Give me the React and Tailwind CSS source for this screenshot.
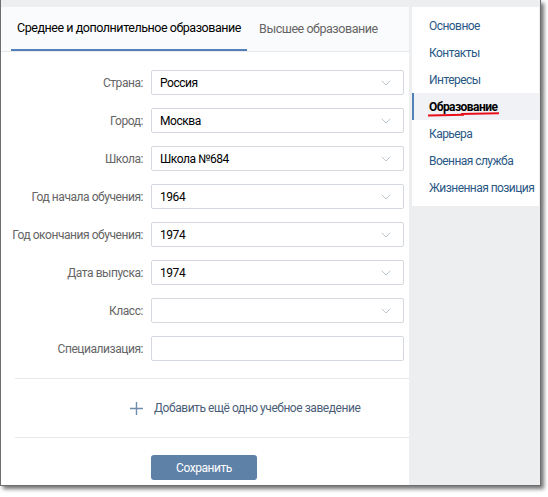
import { ChevronDown } from "lucide-react";

const fields = [
  { label: "Страна:", value: "Россия", select: true },
  { label: "Город:", value: "Москва", select: true },
  { label: "Школа:", value: "Школа №684", select: true },
  { label: "Год начала обучения:", value: "1964", select: true },
  { label: "Год окончания обучения:", value: "1974", select: true },
  { label: "Дата выпуска:", value: "1974", select: true },
  { label: "Класс:", value: "", select: true },
  { label: "Специализация:", value: "", select: false },
];

const menu = [
  "Основное",
  "Контакты",
  "Интересы",
  "Образование",
  "Карьера",
  "Военная служба",
  "Жизненная позиция",
];

function Field({ label, value, select }) {
  return (
    <div className="flex items-center h-[25px]">
      <div className="w-[142px] text-right text-[#656565] whitespace-nowrap">{label}</div>
      <div className="ml-[8px] w-[253px] h-[25px] border border-[#d3d9de] rounded-[2px] flex items-center justify-between pl-[8px] pr-[9px] text-black">
        <span>{value}</span>
        {select && <ChevronDown size={16} strokeWidth={1.1} className="text-[#a5b2c2]" />}
      </div>
    </div>
  );
}

export default function App() {
  return (
    <div className="w-[548px] h-[497px] bg-white overflow-hidden" style={{ fontFamily: "Roboto, 'Liberation Sans', sans-serif" }}>
      <div className="w-[541px] h-[486px] bg-[#edeef0] border-l border-r border-b border-[#6e6e6e] shadow-[3px_3px_4px_rgba(0,0,0,0.55)] pt-[7px] flex gap-[3px] text-[12px] tracking-[-0.45px] overflow-hidden">
        {/* main card */}
        <div className="w-[408px] bg-white flex flex-col">
          <div className="h-[45px] bg-[#fafbfc] border-b border-[#e7e8ec] flex pl-[10px] text-[12.5px] tracking-[-0.45px] whitespace-nowrap">
            <div className="h-full flex items-center px-[6px] border-b-2 border-[#5181b8] text-black mb-[-1px]">
              Среднее и дополнительное образование
            </div>
            <div className="h-full flex items-center px-[12px] text-[#656565]">
              Высшее образование
            </div>
          </div>

          <div className="flex flex-col gap-[13px] pt-[18px] pb-[17px]">
            {fields.map((f) => (
              <Field key={f.label} {...f} />
            ))}
          </div>

          <div className="ml-[14px] border-t border-[#e7e8ec] h-[59px] flex items-center pl-[115px]">
            <div className="flex items-center gap-[11px] text-[#4a5e78]">
              <svg width="13" height="13" viewBox="0 0 13 13">
                <path d="M6.5 0v13M0 6.5h13" stroke="#6f8bad" strokeWidth="1.4" />
              </svg>
              <span>Добавить ещё одно учебное заведение</span>
            </div>
          </div>

          <div className="ml-[14px] border-t border-[#e7e8ec] pt-[17px]">
            <button className="ml-[136px] w-[106px] h-[25px] bg-[#5e81a8] rounded-[3px] text-white text-[12px] flex items-center justify-center">
              Сохранить
            </button>
          </div>
        </div>

        {/* right menu */}
        <div className="w-[127px] h-[199px] bg-white py-[5px] relative tracking-[-0.55px]">
          {menu.map((m) => {
            const active = m === "Образование";
            return (
              <div
                key={m}
                className={
                  active
                    ? "h-[27px] flex items-center pl-[15px] border-l-2 border-[#5181b8] bg-[#f0f2f5] font-bold text-black whitespace-nowrap"
                    : "h-[27px] flex items-center pl-[17px] text-[#2a5885] whitespace-nowrap"
                }
              >
                {m}
              </div>
            );
          })}
          <svg className="absolute left-[15px] top-[104px]" width="74" height="6" viewBox="0 0 74 6">
            <path d="M1 4.5 L37 3.8" stroke="#e8101a" strokeWidth="2" fill="none" />
            <path d="M34 3 L72 2.3" stroke="#e8101a" strokeWidth="2" fill="none" />
          </svg>
        </div>
      </div>
    </div>
  );
}
